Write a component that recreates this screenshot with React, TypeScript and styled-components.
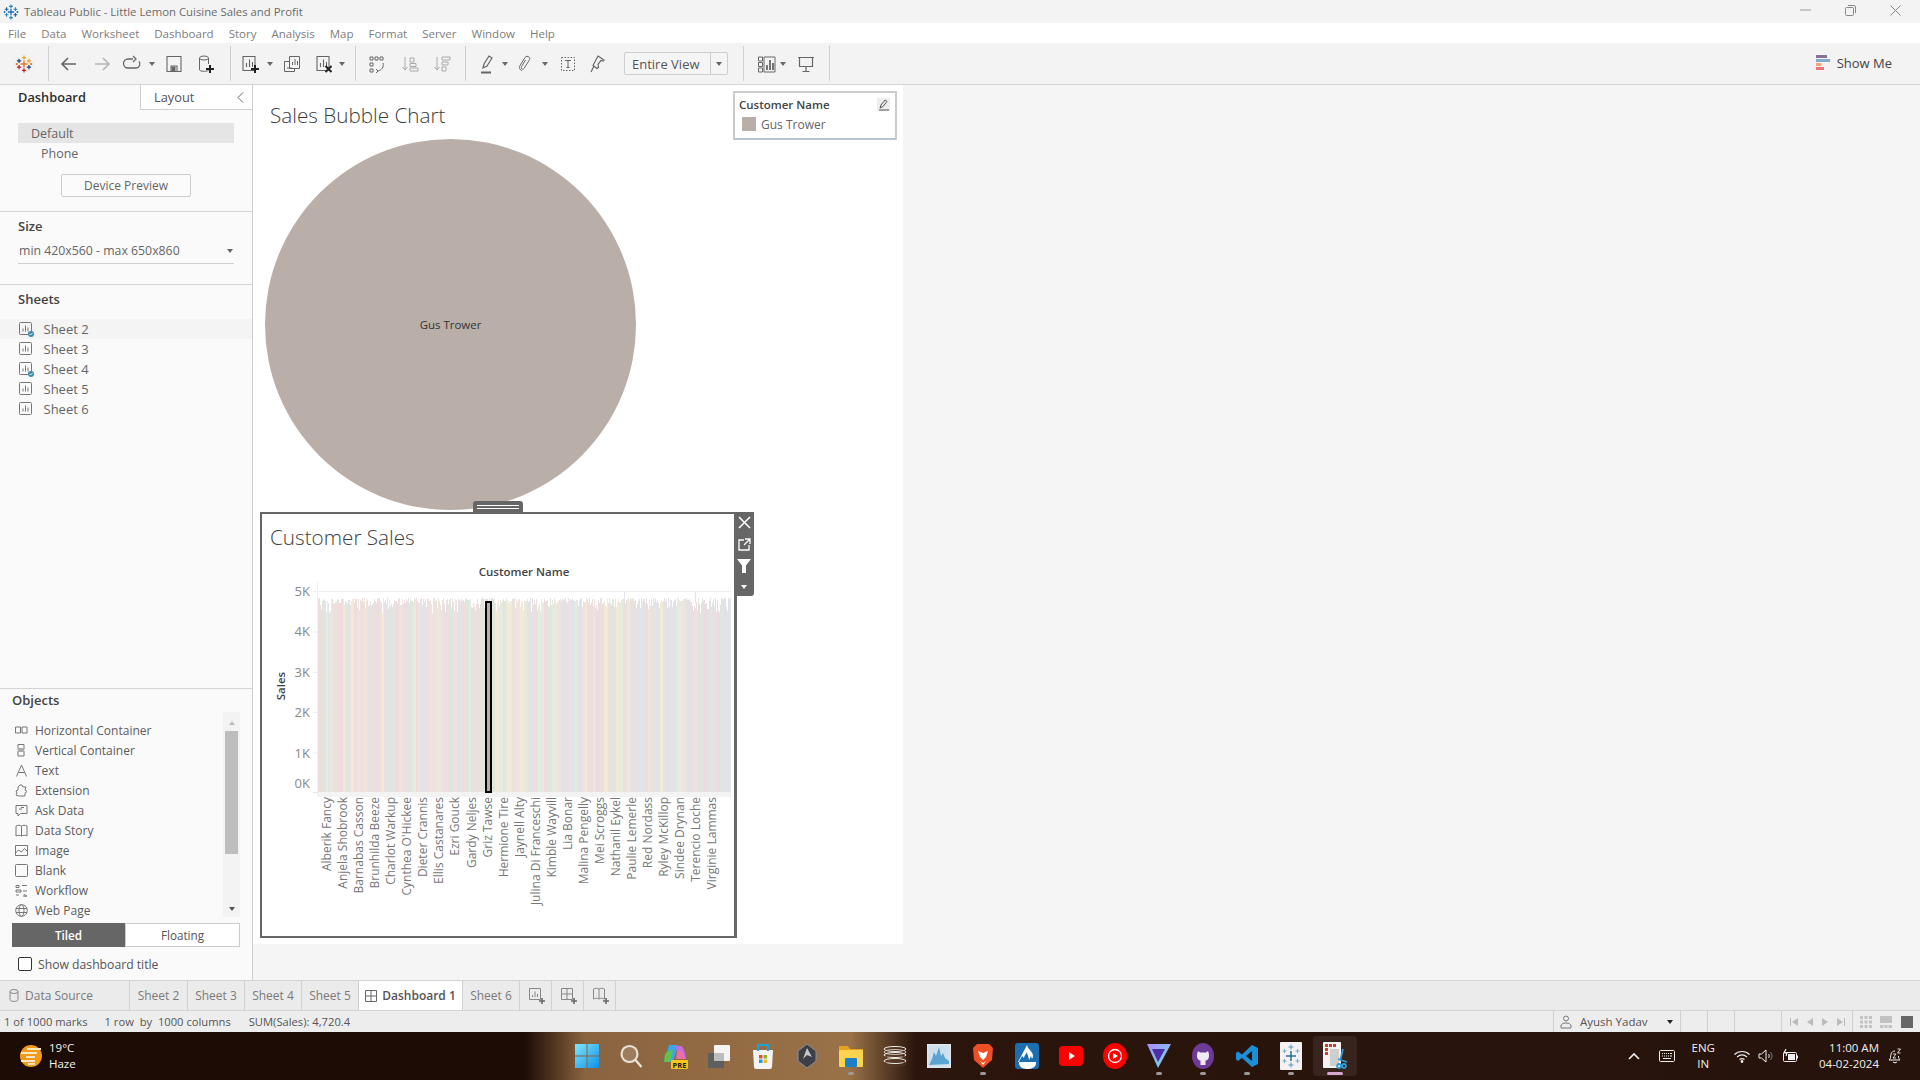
import React from 'react';
import styled, { createGlobalStyle } from 'styled-components';

const Global = createGlobalStyle`
  html, body { margin: 0; padding: 0; width: 1920px; height: 1080px; overflow: hidden; background: #f3f3f3; }
  * { box-sizing: border-box; }
  body { font-family: "Open Sans", "Liberation Sans", sans-serif; font-size: 12px; color: #555; }
`;

const Shell = styled.div`width: 1920px; height: 1080px; display: flex; flex-direction: column;`;

/* ---------- window chrome ---------- */
const TitleBar = styled.div`height: 23px; background: #f3f3f3; display: flex; align-items: center; padding-left: 3px; gap: 5px; font-size: 11.35px; color: #6b6b6b;`;
const WindowControls = styled.div`margin-left: auto; display: flex; align-items: center; height: 100%; padding-right: 19px; gap: 34px; padding-bottom: 3px;`;
const MenuBar = styled.div`height: 20px; background: #fff; display: flex; align-items: center; padding-left: 8px; gap: 15px; font-size: 11.5px; color: #7d7d7d;`;

const ToolBar = styled.div`height: 41px; background: #f3f3f3; display: flex; align-items: center; position: relative;`;
const Tool = styled.div<{ $w: number; $ml: number }>`
  width: ${p => p.$w}px; margin-left: ${p => p.$ml}px; height: 26px; flex: none;
  display: flex; align-items: center; justify-content: center;
`;
const ToolSep = styled.div<{ $ml: number }>`width: 1px; height: 35px; background: #cfcfcf; flex: none; margin-left: ${p => p.$ml}px;`;
const ViewSelect = styled.div`
  width: 104px; height: 23px; margin-left: 17px; flex: none; border: 1px solid #cdcdcd; border-radius: 2px; background: #f5f5f5;
  display: flex; align-items: center; font-size: 13px; color: #555; padding-left: 7px;
`;
const ViewCaret = styled.div`margin-left: auto; width: 17px; height: 100%; border-left: 1px solid #cdcdcd; display: flex; align-items: center; justify-content: center;`;
const ShowMe = styled.div`margin-left: auto; padding-right: 28px; padding-bottom: 2px; display: flex; align-items: center; gap: 6px; font-size: 13px; color: #444;`;
const Caret = styled.span<{ $c?: string }>`display: block; width: 0; height: 0; border-left: 3.5px solid transparent; border-right: 3.5px solid transparent; border-top: 4px solid ${p => p.$c || '#666'};`;

/* ---------- main ---------- */
const Main = styled.div`flex: 1; display: flex; min-height: 0; border-top: 1px solid #d4d4d4; border-bottom: 1px solid #d4d4d4;`;
const Panel = styled.aside`width: 253px; flex: none; background: #fafafa; border-right: 1px solid #cfcfcf; display: flex; flex-direction: column;`;
const PanelTabs = styled.div`height: 25px; display: flex; flex: none;`;
const PanelTab = styled.div<{ $active?: boolean }>`
  height: 25px; display: flex; align-items: center; font-size: 12.8px;
  ${p => p.$active
    ? `width: 140px; padding: 0 0 2px 18px; font-weight: 600; color: #2e2e2e;`
    : `flex: 1; padding-left: 13px; color: #555; background: #fff; border-left: 1px solid #cfcfcf; border-bottom: 1px solid #cfcfcf;`}
`;
const Chevron = styled.span`margin-left: auto; margin-right: 8px; display: flex;`;
const Section = styled.section<{ $h: number }>`height: ${p => p.$h}px; flex: none; border-bottom: 1px solid #d4d4d4;`;
const SectionGap = styled.div<{ $h: number }>`height: ${p => p.$h}px;`;
const DeviceRow = styled.div<{ $on?: boolean; $indent: number }>`
  margin: 0 18px 0 18px; height: 20px; display: flex; align-items: center; font-size: 12.5px; color: #666;
  padding-left: ${p => p.$indent}px; background: ${p => p.$on ? '#e5e5e5' : 'transparent'};
`;
const DeviceButton = styled.div`margin: 11px 0 0 61px; width: 130px; height: 23px; border: 1px solid #ccc; border-radius: 2px; background: #fbfbfb; display: flex; align-items: center; justify-content: center; font-size: 12px; color: #666;`;
const Heading = styled.div<{ $left?: number }>`font-size: 13px; font-weight: 600; color: #444; padding-left: ${p => p.$left ?? 18}px; line-height: 18px;`;
const SizeSelect = styled.div`margin: 6.5px 18px 0 18px; height: 22px; border-bottom: 1px solid #cfcfcf; display: flex; align-items: center; justify-content: space-between; font-size: 12.3px; color: #666; padding: 0 1px 3px 1px;`;
const SheetList = styled.div`margin-top: 11px;`;
const SheetRow = styled.div<{ $on?: boolean }>`height: 20px; display: flex; align-items: center; padding-left: 19px; gap: 9.5px; font-size: 13px; color: #666; background: ${p => p.$on ? '#f4f4f4' : 'transparent'};`;
const Grow = styled.div`flex: 1; border-bottom: 1px solid #d4d4d4; min-height: 0;`;
const ObjectsWrap = styled.div`flex: none; position: relative; padding-top: 2px;`;
const ObjectsBody = styled.div`display: flex; margin: 3px 12px 0 0; height: 205px;`;
const ObjectList = styled.div`flex: 1; padding: 8px 0 0 15px;`;
const ObjectRow = styled.div`height: 20px; display: flex; align-items: center; gap: 7px; font-size: 12px; color: #5c5c5c;`;
const ObjectIcon = styled.span`width: 13px; display: flex; justify-content: center; flex: none;`;
const ScrollTrack = styled.div`width: 17px; background: #f3f3f3; display: flex; flex-direction: column; align-items: center; padding-top: 9px;`;
const ScrollThumb = styled.div`width: 13px; height: 123px; margin-top: 6px; background: #bdbdbd;`;
const ScrollDown = styled.div`margin-top: auto; margin-bottom: 6px;`;
const UpCaret = styled.span`display: block; width: 0; height: 0; border-left: 3.5px solid transparent; border-right: 3.5px solid transparent; border-bottom: 4px solid #bbb;`;
const Segmented = styled.div`display: flex; margin: 6px 0 0 12px; width: 228px; height: 24px;`;
const SegButton = styled.div<{ $on?: boolean }>`
  flex: 1; display: flex; align-items: center; justify-content: center; font-size: 11.7px;
  ${p => p.$on ? `background: #666; color: #fff; font-weight: 600;` : `background: #fff; color: #555; border: 1px solid #ccc;`}
`;
const TitleCheck = styled.div`display: flex; align-items: center; gap: 6px; margin: 10px 0 9px 18px; height: 14px; font-size: 12.2px; color: #555;`;
const CheckBox = styled.span`width: 14px; height: 14px; border: 1px solid #333; border-radius: 2px; background: #fff; flex: none;`;

/* ---------- canvas ---------- */
const Canvas = styled.main`flex: 1; background: #f5f5f5; min-width: 0;`;
const Dashboard = styled.div`width: 650px; height: 859px; background: #fff; position: relative; padding: 0 0 0 7px;`;
const TopZone = styled.div`height: 427px; padding: 13px 0 0 10px;`;
const ChartTitle = styled.div`font-size: 20.7px; font-weight: 300; color: #3d3d3d; line-height: 34px; height: 34px;`;
const BubbleSvg = styled.svg`display: block; margin: 6.5px 0 0 -5px;`;
const Legend = styled.div`position: absolute; left: 480px; top: 6px; width: 164px; height: 49px; border: 2px solid #ccc; border-bottom-color: #b9c3cf; background: #fff; border-radius: 1px; padding: 2px 0 0 4px;`;
const LegendHead = styled.div`display: flex; align-items: center; font-size: 11.5px; font-weight: 600; color: #444; height: 18px;`;
const LegendPen = styled.span`margin-left: auto; margin-right: 5px; width: 13px; height: 13px; background: #eee; display: flex;`;
const LegendItem = styled.div`display: flex; align-items: center; gap: 5px; font-size: 12px; color: #666; height: 22px; padding-left: 3px;`;
const Swatch = styled.span`width: 14px; height: 14px; background: #b9aea8;`;
const SelectedZone = styled.div`width: 477px; height: 426px; border: 2px solid #666; position: relative; border-right-width: 3px;`;
const ZoneTitle = styled.div`font-size: 20.7px; font-weight: 300; color: #3d3d3d; padding-left: 8px; height: 46px; line-height: 46px;`;
const Handle = styled.div`position: absolute; left: 211px; top: -13px; width: 50px; height: 11px; background: #666; border-radius: 3px 3px 0 0; display: flex; flex-direction: column; justify-content: center; gap: 2px; align-items: center;`;
const HandleLine = styled.span`display: block; width: 42px; height: 1px; background: #fff;`;
const Flyout = styled.div`position: absolute; left: 100%; top: -2px; width: 20px; height: 84px; background: #666; border-radius: 0 0 3px 0; display: flex; flex-direction: column; align-items: center; padding-top: 0; color: #fff;`;
const FlyBtn = styled.div`height: 21.500px; flex: none; display: flex; align-items: center; justify-content: center;`;
const ChartSvg = styled.svg`display: block; font-family: "Open Sans", "Liberation Sans", sans-serif;`;

/* ---------- tabs + status ---------- */
const TabBar = styled.div`height: 30px; flex: none; background: #ebebeb; border-bottom: 1px solid #d4d4d4; display: flex;`;
const SheetTab = styled.div<{ $w: number; $on?: boolean }>`
  width: ${p => p.$w}px; flex: none; display: flex; align-items: center; justify-content: center; gap: 5px;
  font-size: 12px; border-right: 1px solid #d0d0d0; color: ${p => p.$on ? '#555' : '#7a7a7a'};
  font-weight: ${p => p.$on ? 600 : 400};
  background: ${p => p.$on ? '#fff' : 'transparent'};
`;
const SourceTab = styled(SheetTab)`justify-content: flex-start; padding-left: 9px; gap: 6px;`;
const StatusBar = styled.div`height: 21px; flex: none; background: #ededed; display: flex; align-items: center; font-size: 11.2px; color: #555; padding-left: 4px;`;
const StatusText = styled.span<{ $ml?: number }>`margin-left: ${p => p.$ml || 0}px; white-space: pre;`;
const StatusRight = styled.div`margin-left: auto; display: flex; height: 100%;`;
const StatusCell = styled.div<{ $w: number }>`width: ${p => p.$w}px; height: 100%; border-left: 1px solid #d0d0d0; display: flex; align-items: center; justify-content: space-around; color: #555; font-size: 11.5px; padding: 0 3px;`;
const UserCell = styled(StatusCell)`justify-content: flex-start; padding: 0 7px 0 6px;`;
const UserName = styled.span`flex: 1; margin-left: 8px;`;

/* ---------- taskbar ---------- */
const Taskbar = styled.footer`
  height: 48px; flex: none; display: flex; align-items: center; color: #fff;
  background: linear-gradient(90deg, #1d0c06 0, #1d0c06 525px, #8a6440 585px, #9a7248 850px, #2b150d 915px, #26130c 100%);
`;
const Weather = styled.div`width: 565px; flex: none; display: flex; align-items: center; padding-left: 19px; gap: 6px;`;
const WeatherText = styled.div`font-size: 11.5px; line-height: 16px; color: #f2f2f2;`;
const TaskIcons = styled.div`display: flex;`;
const TaskIcon = styled.div<{ $on?: boolean }>`
  width: 44px; height: 40px; flex: none; position: relative; display: flex; align-items: center; justify-content: center; border-radius: 4px;
  background: ${p => p.$on ? 'rgba(255,255,255,.07)' : 'transparent'};
`;
const RunDot = styled.span<{ $on?: boolean }>`position: absolute; bottom: 1px; left: 50%; transform: translateX(-50%); height: 3px; border-radius: 2px; width: ${p => p.$on ? '16px' : '6px'}; background: ${p => p.$on ? '#d9a6cf' : '#9a9a9a'};`;
const Tray = styled.div`margin-left: auto; display: flex; align-items: center; height: 100%; padding-right: 18px;`;
const TraySlot = styled.div<{ $ml: number }>`margin-left: ${p => p.$ml}px; display: flex; align-items: center;`;
const Lang = styled.div`font-size: 11.5px; line-height: 16px; text-align: center; color: #f0f0f0; margin-left: 17px;`;
const Clock = styled.div`font-size: 11.5px; line-height: 16px; text-align: right; color: #f0f0f0; margin-left: 20px;`;

/* ---------- icons ---------- */
const S = ({ w = 20, h = 20, children, vb }: { w?: number; h?: number; children: React.ReactNode; vb?: string }) => (
  <svg width={w} height={h} viewBox={vb || `0 0 ${w} ${h}`} fill="none" stroke="#666" strokeWidth="1">{children}</svg>
);
const Plus = ({ x, y, c = '#222' }: { x: number; y: number; c?: string }) => (
  <path d={`M${x - 4} ${y}h8M${x} ${y - 4}v8`} stroke={c} strokeWidth="2" />
);
const Cross = ({ x, y, r, c, w = 1.4 }: { x: number; y: number; r: number; c: string; w?: number }) => (
  <path d={`M${x - r} ${y}h${2 * r}M${x} ${y - r}v${2 * r}`} stroke={c} strokeWidth={w} />
);
const TableauMark = ({ size = 16, colors }: { size?: number; colors: string[] }) => (
  <svg width={size} height={size} viewBox="0 0 20 20" fill="none">
    <Cross x={10} y={10} r={4} c={colors[0]} w={1.6} />
    <Cross x={10} y={3} r={2.4} c={colors[1]} />
    <Cross x={10} y={17} r={2.4} c={colors[2]} />
    <Cross x={4.5} y={6.5} r={2.4} c={colors[3]} />
    <Cross x={15.5} y={6.5} r={2.4} c={colors[1]} />
    <Cross x={4.5} y={13.5} r={2.4} c={colors[2]} />
    <Cross x={15.5} y={13.5} r={2.4} c={colors[3]} />
    <Cross x={2} y={10} r={1.2} c={colors[0]} />
    <Cross x={18} y={10} r={1.2} c={colors[0]} />
  </svg>
);

const toolIcons: Record<string, React.ReactNode> = {
  logo: <TableauMark size={18} colors={['#e8762b', '#e8a33d', '#c72037', '#1f447a']} />,
  back: <S><path d="M17 10H4M9 4l-6 6 6 6" strokeWidth="1.6" /></S>,
  fwd: <S><path d="M3 10h13M11 4l6 6-6 6" stroke="#b5b5b5" strokeWidth="1.6" /></S>,
  redo: <S><path d="M11 5H6a4 4 0 0 0 0 9h8a4 4 0 0 0 3-6.5M11 2l3 3-3 3" strokeWidth="1.3" /></S>,
  save: <S><path d="M3 2.5h14v15H3zM7 17v-5h6v5" strokeWidth="1.1" /><rect x="8" y="13" width="3" height="4" fill="#666" /></S>,
  ds: <S><ellipse cx="8" cy="4" rx="4.5" ry="2" /><path d="M3.5 4v12c1 1.6 6 1.6 9 .6M12.5 4v6" /><Plus x={14} y={15} /></S>,
  newSheet: <S><path d="M3 2.5h12v14H3zM6.5 13V9M9.5 13V5.5M12.5 13V8" strokeWidth="1.1" /><Plus x={15} y={15} /></S>,
  dup: <S><path d="M7.5 2.5h10v12h-10zM2.5 7.5h5M2.5 7.5v10h10v-3M10.5 11V8M13 11V5M15.5 11V7M5 14h5" /></S>,
  clear: <S><path d="M3 2.5h12v14H3zM6.5 13V9M9.5 13V5.5M12.5 13V8" strokeWidth="1.1" /><path d="M11.5 12l6 6M17.5 12l-6 6" stroke="#222" strokeWidth="2" /></S>,
  swap: <S><path d="M3 3h3v3H3zM8 3h3v3H8zM13 3h3v3h-3zM3 9h3v3H3zM3 15h3v3H3zM16 9c1 4-1 7-5 8M9 15l2 2-2 2" /></S>,
  asc: <S><path d="M5 3v13M2.5 13L5 16l2.5-3M10 4h4v4h-4zM10 9.5h6v3h-6zM10 14h8v3h-8z" stroke="#aaa" /></S>,
  desc: <S><path d="M5 3v13M2.5 13L5 16l2.5-3M10 3h8v3h-8zM10 8h6v3h-6zM10 13h4v4h-4z" stroke="#aaa" /></S>,
  pen: <S><path d="M6 14l1-4 5-8 3 2-5 8zM4 18.5h10" strokeWidth="1.2" /><path d="M4 18.5h10" strokeWidth="2" /></S>,
  clip: <S><path d="M7 16.5c-3-1-3-3-2-5l5-8c1-1.500 3-1.500 4-.5s1 2 0 3.500l-5 8c-.6 1-2 .8-2.500 0-.5-.5-.3-1.300 0-2l4-6.500" /></S>,
  text: <S><path d="M3.500 3.500h13v13h-13z" strokeDasharray="1.500 1.500" /><path d="M7 6.500h6M10 6.500v7M8.500 13.500h3" /></S>,
  pin: <S><path d="M11 2l6 4-1 1-2-.5-3 4 .5 3-1.500 1-4-3zM7 12l-3 6" strokeWidth="1.2" /></S>,
  mini: <S><path d="M2.500 3h4v4h-4zM2.500 8.500h4v4h-4zM2.500 14h4v4h-4zM8 3h11v15H8z" /><path d="M11 16v-5M14 16V6M17 16v-7" strokeWidth="1.800" /></S>,
  present: <S><path d="M2 3.500h16M3.500 3.500h13v9h-13zM10 12.500v5M6.500 17.500h7" strokeWidth="1.200" /></S>,
};
const toolLayout: (string | number)[][] = [
  ['logo', 24], ['sep', 48], ['back', 69], ['fwd', 102], ['redo', 132], ['caret', 152], ['save', 174], ['ds', 206],
  ['sep', 230], ['newSheet', 250], ['caret', 270], ['dup', 292], ['clear', 324], ['caret', 342], ['sep', 355],
  ['swap', 377], ['asc', 410], ['desc', 442], ['sep', 465], ['pen', 487], ['caret', 505], ['clip', 525], ['caret', 545],
  ['text', 568], ['pin', 597],
];
const toolLayout2: (string | number)[][] = [
  ['sep', 743], ['mini', 766], ['caret', 783], ['present', 806], ['sep', 829],
];
function renderTools(list: (string | number)[][], start: number) {
  let end = start;
  return list.map(([name, c], i) => {
    const center = c as number;
    if (name === 'sep') {
      const ml = center - end; end = center + 1;
      return <ToolSep key={i} $ml={ml} />;
    }
    const w = name === 'caret' ? 7 : 20;
    const ml = center - w / 2 - end; end = center + w / 2;
    return <Tool key={i} $w={w} $ml={ml}>{name === 'caret' ? <Caret /> : toolIcons[name as string]}</Tool>;
  });
}

const SheetGlyph = ({ check }: { check?: boolean }) => (
  <svg width="15" height="15" viewBox="0 0 15 15" fill="none" stroke="#777">
    <rect x="0.500" y="0.500" width="12" height="12" rx="1" />
    <path d="M4 9.500V6.500M6.500 9.500V3.500M9 9.500V5.500" />
    {check && <><circle cx="12" cy="12" r="3" fill="#3f8bb0" stroke="none" /><path d="M10.500 12l1 1 2-2" stroke="#fff" strokeWidth=".9" /></>}
  </svg>
);

const objectIcons: React.ReactNode[] = [
  <S w={13} h={13}><path d="M.5 3h5v6h-5zM7 3h5v6H7z" stroke="#777" /></S>,
  <S w={13} h={13}><path d="M3 .5h6v5H3zM3 7h6v5H3z" stroke="#777" /><rect x="3" y="4" width="6" height="4" fill="#aaa" stroke="none" /></S>,
  <S w={13} h={13}><path d="M1.500 12.500L6.500 1l5 11.500M3.500 8.500h6" stroke="#777" /></S>,
  <S w={13} h={13}><path d="M5 1h2l1 2h3l-1 3 2 1.500L10 9v3H4l-3-1 1-2-1-2 2-1V3z" stroke="#777" /></S>,
  <S w={13} h={13}><path d="M1 1.500h11v8H5.500L3 12V9.500H1zM4 5h3M6 3.500h3" stroke="#777" /></S>,
  <S w={13} h={13}><path d="M1 2c2-1 4-1 5.500 0C8 1 10 1 12 2v10c-2-1-4-1-5.500 0C5 11 3 11 1 12zM6.500 2v10" stroke="#777" /></S>,
  <S w={13} h={13}><path d="M.5 1.500h12v10H.5zM.5 9l3-3 3 2 3-3.500 3 3" stroke="#777" /></S>,
  <S w={13} h={13}><rect x=".5" y=".5" width="12" height="12" rx="1" stroke="#777" /></S>,
  <S w={13} h={13}><path d="M1 1.500h3v2H1zM7 1.500h5M1 6h5v2H1zM8 7h4M1 11h3M9 10.500l3 1.500-3 1.500z" stroke="#777" /></S>,
  <S w={13} h={13}><circle cx="6.500" cy="6.500" r="5.800" stroke="#777" /><ellipse cx="6.500" cy="6.500" rx="2.500" ry="5.800" stroke="#777" /><path d="M1 4.500h11M1 8.500h11" stroke="#777" /></S>,
];
const objects = ['Horizontal Container', 'Vertical Container', 'Text', 'Extension', 'Ask Data', 'Data Story', 'Image', 'Blank', 'Workflow', 'Web Page'];
const sheets: [string, boolean][] = [['Sheet 2', true], ['Sheet 3', false], ['Sheet 4', true], ['Sheet 5', false], ['Sheet 6', false]];
const names = ['Alberik Fancy', 'Anjela Shobrook', 'Barnabas Casson', 'Brunhilda Beeze', 'Charlot Warkup', "Cynthea O'Hickee", 'Dieter Crannis', 'Ellis Castanares', 'Ezri Gouck', 'Gardy Neljes', 'Griz Tawse', 'Hermione Tire', 'Jaynell Alty', 'Julina Di Franceschi', 'Kimble Wayvill', 'Lia Bonar', 'Malina Pengelly', 'Mei Scroggs', 'Nathanil Eykel', 'Paulie Lemerle', 'Red Nordass', 'Ryley McKillop', 'Sindee Drynan', 'Terencio Loche', 'Virginie Lammas'];

const pastel = ['#eedcdf', '#e4e2e2', '#f2e9d6', '#dfe7dc', '#e9dfe3', '#dee4e9', '#ebe0dc', '#f0e3df', '#e3e3e3', '#e7ebdf'];
function makeBars() {
  let seed = 12345;
  const rnd = () => { seed = (seed * 16807) % 2147483647; return seed / 2147483647; };
  const out: { x: number; top: number; c: string }[] = [];
  let x = 318, color = pastel[0], run = 0;
  while (x < 731) {
    if (run <= 0) { color = pastel[Math.floor(rnd() * pastel.length)]; run = 2 + Math.floor(rnd() * 3); }
    out.push({ x, top: 598 + rnd() * rnd() * 16, c: color });
    x += 1; run -= 1;
  }
  return out;
}
const bars = makeBars();

const axisLabels: [string, number][] = [['5K', 591], ['4K', 631], ['3K', 672], ['2K', 712], ['1K', 752.500], ['0K', 782.500]];

/* taskbar art */
const Win = () => (
  <svg width="24" height="24" viewBox="0 0 24 24">
    <defs><linearGradient id="wg" x1="0" y1="0" x2="1" y2="1"><stop offset="0" stopColor="#7fe6fb" /><stop offset="1" stopColor="#0f90e8" /></linearGradient></defs>
    <path d="M0 0h11.500v11.500H0zM12.500 0H24v11.500H12.500zM0 12.500h11.500V24H0zM12.500 12.500H24V24H12.500z" fill="url(#wg)" />
  </svg>
);
const taskArt: React.ReactNode[] = [
  <Win />,
  <svg width="24" height="24" viewBox="0 0 24 24" fill="none" stroke="#e8e2da"><circle cx="10.500" cy="10" r="8" strokeWidth="2.200" fill="rgba(255,255,255,.15)" /><path d="M16.500 16l6 7" strokeWidth="2.400" /></svg>,
  <svg width="26" height="26" viewBox="0 0 26 26"><path d="M7 2h9l-5 17H2z" fill="#39a8e8" /><path d="M3 11c2-3 6-4 8-4l-3 12H2z" fill="#5fc24d" /><path d="M14 3h5c2 0 4 6 5 13h-8z" fill="#c86ae0" /><path d="M15 8h5l3 8h-9z" fill="#ec6fa8" /><rect x="9" y="17" width="17" height="9" fill="#f8c61c" rx="1" /><text x="17.500" y="24.500" fontSize="7.500" fontWeight="700" fill="#222" textAnchor="middle" fontFamily="Open Sans">PRE</text></svg>,
  <svg width="24" height="24" viewBox="0 0 24 24"><rect x="1" y="9" width="16" height="15" rx="1" fill="#5e5e5e" /><rect x="7" y="1" width="16" height="16" rx="1" fill="#f4f4f4" /><rect x="7" y="9" width="10" height="8" fill="#bdbdbd" /></svg>,
  <svg width="24" height="26" viewBox="0 0 24 26"><path d="M2 7h20l-1 17a2 2 0 0 1-2 2H5a2 2 0 0 1-2-2z" fill="#f4f4f4" /><path d="M7 8V2h10v6" fill="none" stroke="#1fa0d8" strokeWidth="2" /><rect x="8" y="12" width="3.500" height="3.500" fill="#e8532b" /><rect x="12.500" y="12" width="3.500" height="3.500" fill="#7eb92c" /><rect x="8" y="16.500" width="3.500" height="3.500" fill="#1f9ee8" /><rect x="12.500" y="16.500" width="3.500" height="3.500" fill="#f8b71a" /></svg>,
  <svg width="22" height="26" viewBox="0 0 22 26"><path d="M11 1l9 7v10l-9 7-9-7V8z" fill="#3c4046" stroke="#8c9096" /><path d="M11 5l5 9-5-2-4 4z" fill="#c4c8cc" /></svg>,
  <svg width="26" height="24" viewBox="0 0 26 24"><path d="M1 2h9l2 3h13v6H1z" fill="#e8a11c" /><rect x="1" y="6" width="24" height="17" rx="1" fill="#fbd34e" /><rect x="7" y="14" width="12" height="9" rx="1" fill="#1d80c6" /></svg>,
  <svg width="24" height="22" viewBox="0 0 24 22" fill="none" stroke="#f2ede8" strokeWidth="1"><ellipse cx="12" cy="4" rx="11" ry="2.500" /><ellipse cx="12" cy="7" rx="11" ry="2.500" stroke="#c9bfb5" /><ellipse cx="12" cy="10" rx="11" ry="2.500" /><ellipse cx="12" cy="13" rx="11" ry="2.500" stroke="#5a3a25" /><ellipse cx="12" cy="16" rx="11" ry="2.500" /><ellipse cx="12" cy="18.500" rx="11" ry="2.500" stroke="#5a3a25" /></svg>,
  <svg width="24" height="24" viewBox="0 0 24 24"><rect width="24" height="24" fill="#dfe7ec" /><rect x="1.500" y="1.500" width="21" height="21" fill="#cfe0ec" /><path d="M2 21l3-6 2-7 2 4 3-9 2 9 2-3 2 5 4 3v3z" fill="#5ba4d2" /></svg>,
  <svg width="22" height="26" viewBox="0 0 22 26"><path d="M5 1h12l4 4-1 12-9 8-9-8L1 5z" fill="#ef4f25" /><path d="M6 8l5 2 5-2-2 6-3 3-3-3z" fill="#fff" /><path d="M8 18l3 2 3-2-3 4z" fill="#fff" /></svg>,
  <svg width="24" height="26" viewBox="0 0 24 26"><rect width="24" height="26" rx="3" fill="#1b6fb0" /><path d="M12 2c1 5 6 6 6 11 0 1-.5 2-1 3l-1-3c-1 1-1 3-2 4 0-3-2-5-2-8-1 2-3 4-3 6l-2-2c-1 3-3 4-3 7 0 3 3 6 8 6s9-2 9-6v-1H3" fill="#fff" /></svg>,
  <svg width="24" height="24" viewBox="0 0 24 24"><rect y="2" width="24" height="20" rx="4" fill="#f00" /><path d="M10 8l6 4-6 4z" fill="#fff" /></svg>,
  <svg width="24" height="26" viewBox="0 0 24 26" fill="none"><ellipse cx="12" cy="13" rx="12" ry="13" fill="#f00" /><circle cx="12" cy="13" r="6.500" stroke="#fff" strokeWidth="1.300" /><path d="M10 10l5 3-5 3z" fill="#fff" /></svg>,
  <svg width="24" height="26" viewBox="0 0 24 26"><defs><linearGradient id="pv" x1="0" y1="0" x2="1" y2="1"><stop offset="0" stopColor="#a88cff" /><stop offset="1" stopColor="#6fe0d8" /></linearGradient></defs><path d="M0 1h24L11 25z" fill="url(#pv)" /><path d="M5 6h13l-7 13z" fill="#4b2fa5" /></svg>,
  <svg width="24" height="26" viewBox="0 0 24 26"><ellipse cx="12" cy="13" rx="11" ry="13" fill="#6e3a97" /><path d="M7 8l2 1.500h6L17 8c1 2 1 4 1 5 0 3-2 5-6 5s-6-2-6-5c0-1 0-3 1-5zM9.500 18v4h5v-4z" fill="#f0eaf5" /></svg>,
  <svg width="24" height="24" viewBox="0 0 24 24"><path d="M17 1l6 3v16l-6 3-10-9-4 3-2-1.500V9l2-1.500 4 3zm0 6l-6 5 6 5z" fill="#1c8fd6" /></svg>,
  <svg width="22" height="28" viewBox="0 0 22 28" fill="none"><rect width="22" height="28" rx="1" fill="#f2f2f2" /><Cross x={11} y={14} r={5} c="#2a6d9a" w={1.500} /><Cross x={11} y={5} r={2.500} c="#5b94b5" w={1} /><Cross x={11} y={23} r={2.500} c="#5b94b5" w={1} /><Cross x={4.500} y={9} r={2} c="#7aa9c4" w={1} /><Cross x={17.500} y={9} r={2} c="#7aa9c4" w={1} /><Cross x={4.500} y={19} r={2} c="#7aa9c4" w={1} /><Cross x={17.500} y={19} r={2} c="#7aa9c4" w={1} /></svg>,
  <svg width="26" height="30" viewBox="0 0 26 30" fill="none"><rect x="1" y="1" width="18" height="26" rx="1" fill="#f3f3f3" /><path d="M3 3h3v3H3zM7 3h3v3H7zM11 3h3v3h-3zM3 7h3v3H3zM3 11h3v3H3z" fill="#d23b2c" /><rect x="8" y="8" width="9" height="17" fill="#cfcfcf" /><path d="M21 8l-3 12M16 18l9 3M17 23a2 2 0 1 0 .01 0zM22 23a2 2 0 1 0 .01 0" stroke="#2d9fd6" strokeWidth="1.800" /></svg>,
];
const dotted = [6, 9, 13, 14, 15, 16];

export default function App() {
  return (
    <Shell>
      <Global />
      <TitleBar>
        <TableauMark size={16} colors={['#1f6fb0', '#2a87c0', '#2a87c0', '#1f5f96']} />
        <span>Tableau Public - Little Lemon Cuisine Sales and Profit</span>
        <WindowControls>
          <svg width="11" height="2" viewBox="0 0 11 2"><path d="M0 1h11" stroke="#999" /></svg>
          <svg width="11" height="11" viewBox="0 0 11 11" fill="none" stroke="#888"><rect x=".5" y="2.500" width="8" height="8" rx="1" /><path d="M3 .5h6a1.500 1.500 0 0 1 1.500 1.500v6" /></svg>
          <svg width="11" height="11" viewBox="0 0 11 11" fill="none" stroke="#888"><path d="M.5.5l10 10M10.500.5l-10 10" /></svg>
        </WindowControls>
      </TitleBar>
      <MenuBar>
        {['File', 'Data', 'Worksheet', 'Dashboard', 'Story', 'Analysis', 'Map', 'Format', 'Server', 'Window', 'Help'].map(m => <span key={m}>{m}</span>)}
      </MenuBar>
      <ToolBar>
        {renderTools(toolLayout, 0)}
        <ViewSelect>Entire View<ViewCaret><Caret /></ViewCaret></ViewSelect>
        {renderTools(toolLayout2, 728)}
        <ShowMe>
          <svg width="15" height="16" viewBox="0 0 15 16"><rect width="11" height="3" fill="#8a7197" /><rect y="4" width="14" height="3" fill="#86a9cc" /><rect y="8" width="5.500" height="3" fill="#f5a57a" /><rect y="12" width="8" height="3" fill="#f0737a" /></svg>
          Show Me
        </ShowMe>
      </ToolBar>

      <Main>
        <Panel>
          <PanelTabs>
            <PanelTab $active>Dashboard</PanelTab>
            <PanelTab>Layout<Chevron><svg width="7" height="11" viewBox="0 0 7 11" fill="none" stroke="#666"><path d="M6 .5l-5 5 5 5" /></svg></Chevron></PanelTab>
          </PanelTabs>
          <Section $h={102}>
            <SectionGap $h={13} />
            <DeviceRow $on $indent={13}>Default</DeviceRow>
            <DeviceRow $indent={23}>Phone</DeviceRow>
            <DeviceButton>Device Preview</DeviceButton>
          </Section>
          <Section $h={73}>
            <SectionGap $h={5} />
            <Heading>Size</Heading>
            <SizeSelect>min 420x560 - max 650x860<Caret /></SizeSelect>
          </Section>
          <SectionGap $h={5} />
          <Heading>Sheets</Heading>
          <SheetList>
            {sheets.map(([n, c], i) => (
              <SheetRow key={n} $on={i === 0}><SheetGlyph check={c} />{n}</SheetRow>
            ))}
          </SheetList>
          <Grow />
          <ObjectsWrap>
            <Heading $left={12}>Objects</Heading>
            <ObjectsBody>
              <ObjectList>
                {objects.map((o, i) => <ObjectRow key={o}><ObjectIcon>{objectIcons[i]}</ObjectIcon>{o}</ObjectRow>)}
              </ObjectList>
              <ScrollTrack><UpCaret /><ScrollThumb /><ScrollDown><Caret $c="#555" /></ScrollDown></ScrollTrack>
            </ObjectsBody>
            <Segmented><SegButton $on>Tiled</SegButton><SegButton>Floating</SegButton></Segmented>
            <TitleCheck><CheckBox />Show dashboard title</TitleCheck>
          </ObjectsWrap>
        </Panel>

        <Canvas>
          <Dashboard>
            <TopZone>
              <ChartTitle>Sales Bubble Chart</ChartTitle>
              <BubbleSvg width="371" height="371" viewBox="0 0 372 372">
                <circle cx="186" cy="186" r="186" fill="#b9aea8" />
                <text x="186" y="191" fontSize="11.500" fill="#333" textAnchor="middle" fontFamily="Open Sans">Gus Trower</text>
              </BubbleSvg>
            </TopZone>
            <Legend>
              <LegendHead>Customer Name<LegendPen><svg width="13" height="13" viewBox="0 0 13 13" fill="none" stroke="#555"><path d="M3 10l1-3 4-5 2 1.500-4 5zM2 12h10" /></svg></LegendPen></LegendHead>
              <LegendItem><Swatch />Gus Trower</LegendItem>
            </Legend>
            <SelectedZone>
              <Handle><HandleLine /><HandleLine /></Handle>
              <Flyout>
                <FlyBtn><svg width="13" height="13" viewBox="0 0 13 13" fill="none" stroke="#fff" strokeWidth="1.600"><path d="M1 1l11 11M12 1L1 12" /></svg></FlyBtn>
                <FlyBtn><svg width="13" height="13" viewBox="0 0 13 13" fill="none" stroke="#fff" strokeWidth="1.300"><path d="M6 2H1v10h10V7M7 1h5v5M12 1L6 7" /></svg></FlyBtn>
                <FlyBtn><svg width="14" height="14" viewBox="0 0 14 14" fill="#fff"><path d="M0 0h14L9 6.500V14H5V6.500z" /></svg></FlyBtn>
                <FlyBtn><Caret $c="#fff" /></FlyBtn>
              </Flyout>
              <ZoneTitle>Customer Sales</ZoneTitle>
              <ChartSvg width="472" height="376" viewBox="262 560 472 376">
                <text x="524" y="576" fontSize="11.500" fontWeight="600" fill="#444" textAnchor="middle">Customer Name</text>
                <text transform="translate(285,686) rotate(-90)" fontSize="11.500" fontWeight="600" fill="#444" textAnchor="middle">Sales</text>
                <rect x="317" y="582" width="1" height="214" fill="#f0f0f0" />
                <rect x="317" y="792" width="414" height="5" fill="#f3f3f3" />
                {[591, 631.500, 672, 712, 752.500].map(y => <rect key={y} x="313" y={y} width="418" height="1" fill="#eeeeee" />)}
                <rect x="313" y="792" width="5" height="1" fill="#e5e5e5" />
                {axisLabels.map(([l, y]) => <text key={l} x="310" y={y + 5} fontSize="13" fill="#888" textAnchor="end">{l}</text>)}
                <g shapeRendering="crispEdges">
                  {bars.map(b => <rect key={b.x} x={b.x} y={b.top} width="1" height={792 - b.top} fill={b.c} />)}
                  <rect x="624" y="592" width="1" height="12" fill="#dfe3e8" />
                  <rect x="695" y="591" width="1" height="12" fill="#dfe3e8" />
                </g>
                <rect x="486" y="602" width="5" height="190" fill="#b9aea8" stroke="#000" strokeWidth="2" />
                {names.map((n, i) => (
                  <text key={n} transform={`translate(${331 + i * 16.060},797) rotate(-90)`} fontSize="12" fill="#777" textAnchor="end">{n}</text>
                ))}
              </ChartSvg>
            </SelectedZone>
          </Dashboard>
        </Canvas>
      </Main>

      <TabBar>
        <SourceTab $w={130}>
          <svg width="10" height="13" viewBox="0 0 10 13" fill="none" stroke="#888"><ellipse cx="5" cy="2.500" rx="4" ry="2" /><path d="M1 2.500v8c0 2.500 8 2.500 8 0v-8" /></svg>
          Data Source
        </SourceTab>
        {['Sheet 2', 'Sheet 3', 'Sheet 4', 'Sheet 5'].map(s => <SheetTab key={s} $w={s === 'Sheet 2' ? 58 : 57}>{s}</SheetTab>)}
        <SheetTab $w={104} $on>
          <svg width="12" height="12" viewBox="0 0 12 12" fill="none" stroke="#666"><path d="M.5.500h11v11H.5zM6 .5v11M.5 6h11" /></svg>
          Dashboard 1
        </SheetTab>
        <SheetTab $w={57}>Sheet 6</SheetTab>
        <SheetTab $w={32}><S w={18} h={18} vb="-1 0 18 18"><path d="M1.500 1.500h11v11h-11zM4.500 10V8M7 10V4.500M9.500 10V7" stroke="#888" /><path d="M11 14h6M14 11v6" stroke="#666" strokeWidth="1.600" /></S></SheetTab>
        <SheetTab $w={32}><S w={18} h={18} vb="-1 0 18 18"><path d="M1.500 1.500h11v11h-11zM7 1.500v11M1.500 7h11" stroke="#888" /><path d="M11 14h6M14 11v6" stroke="#666" strokeWidth="1.600" /></S></SheetTab>
        <SheetTab $w={32}><S w={18} h={18} vb="-1 0 18 18"><path d="M1.500 2c2-1 4-1 5.500 0 1.500-1 3.500-1 5.500 0v10c-2-1-4-1-5.500 0-1.500-1-3.500-1-5.500 0zM7 2v10" stroke="#888" /><path d="M11 14h6M14 11v6" stroke="#666" strokeWidth="1.600" /></S></SheetTab>
      </TabBar>
      <StatusBar>
        <StatusText>1 of 1000 marks</StatusText>
        <StatusText $ml={17}>1 row  by  1000 columns</StatusText>
        <StatusText $ml={18}>SUM(Sales): 4,720.4</StatusText>
        <StatusRight>
          <UserCell $w={127}>
            <svg width="12" height="14" viewBox="0 0 12 14" fill="none" stroke="#777"><circle cx="6" cy="3.500" r="2.500" /><path d="M1 13v-2c0-2 2-3 5-3s5 1 5 3v2z" /></svg>
            <UserName>Ayush Yadav</UserName><Caret $c="#222" />
          </UserCell>
          <StatusCell $w={27} />
          <StatusCell $w={27} />
          <StatusCell $w={47} />
          <StatusCell $w={71}>
            <svg width="8" height="8" viewBox="0 0 8 8" fill="#bbb"><path d="M0 0h1v8H0zM8 0v8L2 4z" /></svg>
            <svg width="6" height="8" viewBox="0 0 6 8" fill="#bbb"><path d="M6 0v8L0 4z" /></svg>
            <svg width="6" height="8" viewBox="0 0 6 8" fill="#bbb"><path d="M0 0v8l6-4z" /></svg>
            <svg width="8" height="8" viewBox="0 0 8 8" fill="#bbb"><path d="M7 0h1v8H7zM0 0v8l6-4z" /></svg>
          </StatusCell>
          <StatusCell $w={68}>
            <svg width="12" height="12" viewBox="0 0 12 12" fill="#c2c2c2"><path d="M0 0h3v3H0zM4.500 0h3v3h-3zM9 0h3v3H9zM0 4.500h3v3H0zM4.500 4.500h3v3h-3zM9 4.500h3v3H9zM0 9h3v3H0zM4.500 9h3v3h-3zM9 9h3v3H9z" /></svg>
            <svg width="12" height="12" viewBox="0 0 12 12" fill="#c2c2c2"><path d="M0 0h12v7H0zM0 9h3.500v3H0zM4.500 9h3v3h-3zM8.500 9H12v3H8.500z" /></svg>
            <svg width="12" height="12" viewBox="0 0 12 12" fill="#666"><path d="M0 0h12v12H0z" /></svg>
          </StatusCell>
        </StatusRight>
      </StatusBar>

      <Taskbar>
        <Weather>
          <svg width="24" height="24" viewBox="0 0 24 24"><circle cx="12" cy="12" r="11" fill="#f29a18" /><path d="M8 5h14M2 9h16M7 13h9M2 17h14M9 20h7" stroke="#f7e6c4" strokeWidth="1.800" /></svg>
          <WeatherText>19°C<br />Haze</WeatherText>
        </Weather>
        <TaskIcons>
          {taskArt.map((a, i) => (
            <TaskIcon key={i} $on={i === 17}>
              {a}
              {dotted.includes(i) && <RunDot />}
              {i === 17 && <RunDot $on />}
            </TaskIcon>
          ))}
        </TaskIcons>
        <Tray>
          <TraySlot $ml={0}><svg width="12" height="8" viewBox="0 0 12 8" fill="none" stroke="#eee" strokeWidth="1.600"><path d="M1 7l5-5 5 5" /></svg></TraySlot>
          <TraySlot $ml={19}><svg width="16" height="12" viewBox="0 0 16 12" fill="none" stroke="#eee"><rect x=".5" y=".5" width="15" height="11" rx="1" /><path d="M3 3.500h1M5 3.500h1M7 3.500h1M9 3.500h1M11 3.500h2M3 6h1M5 6h1M7 6h1M9 6h1M11 6h2M4 8.500h8" /></svg></TraySlot>
          <Lang>ENG<br />IN</Lang>
          <TraySlot $ml={19}><svg width="16" height="13" viewBox="0 0 16 13" fill="none" stroke="#eee" strokeWidth="1.200"><path d="M.5 4.500c4-4 11-4 15 0M3 7c3-2.500 7-2.500 10 0M5.500 9.500c1.500-1 3.500-1 5 0" /><circle cx="8" cy="11.500" r=".8" fill="#eee" /></svg></TraySlot>
          <TraySlot $ml={8}><svg width="16" height="14" viewBox="0 0 16 14" fill="none" stroke="#eee"><path d="M1 5h2.500L8 1v12L3.500 9H1zM10.500 5c1 1 1 3 0 4" /><path d="M12.500 3c2 2 2 6 0 8" stroke="#777" /></svg></TraySlot>
          <TraySlot $ml={9}><svg width="16" height="14" viewBox="0 0 16 14" fill="none" stroke="#eee"><rect x=".5" y="3.500" width="13" height="9" rx="1" /><path d="M14.500 6.500v3" /><rect x="5" y="5" width="7" height="6" fill="#eee" stroke="none" /><path d="M3 0L1 4h3L3 7" strokeWidth="1.200" /></svg></TraySlot>
          <Clock>11:00 AM<br />04-02-2024</Clock>
          <TraySlot $ml={9}><svg width="14" height="16" viewBox="0 0 14 16" fill="none" stroke="#eee"><path d="M1 12c2-1 1.500-4 2-6 .5-2 2-3 4-3M1 12h11c-1-1-1.500-2-1.500-4M5 14c1 1 3 1 4 0" /><path d="M5 6h3L5 10h3M9.500 1h3l-3 4h3" strokeWidth=".9" /></svg></TraySlot>
        </Tray>
      </Taskbar>
    </Shell>
  );
}
